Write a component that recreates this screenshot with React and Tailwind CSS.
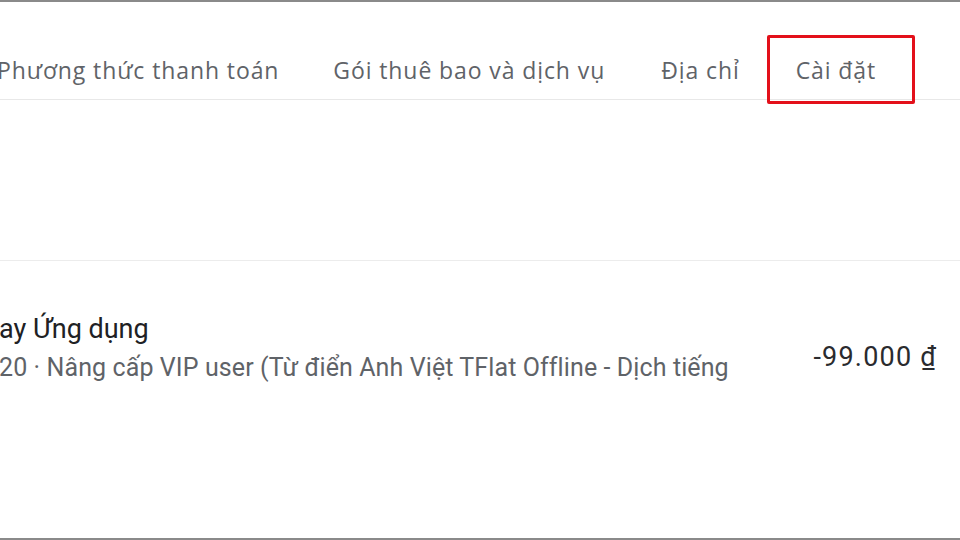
import React from 'react';

const tabs = ['Phương thức thanh toán', 'Gói thuê bao và dịch vụ', 'Địa chỉ', 'Cài đặt'];

export default function App() {
	return (
		<div className="w-[960px] h-[540px] bg-white border-t-2 border-b-2 border-[#8a8a8a] flex flex-col overflow-hidden font-['Roboto',sans-serif]">
			<div className="flex items-center h-[98px] pt-[40px] border-b border-[#e8e8e8] ml-[-3px]">
				{tabs.map((tab, index) => (
					<div
						key={tab}
						className={`relative shrink-0 ${index === 0 ? 'pr-[27px]' : index === 2 ? 'px-[29px]' : 'px-[27px]'}`}
					>
						<span className="text-[23px] leading-[28px] text-[#5f6368] font-['Open_Sans',sans-serif] tracking-[0.9px] whitespace-nowrap">{tab}</span>
						{tab === 'Cài đặt' ? (
							<div className="absolute left-[-2px] right-[-12px] top-[-21px] bottom-[-18px] border-[3px] border-[#e3101a] rounded-[2px]" />
						) : null}
					</div>
				))}
			</div>

			<div className="h-[161px] border-b border-[#ececec]" />

			<div className="flex items-start justify-between pt-[52px] pr-[23px]">
				<div className="flex flex-col ml-[-1px]">
					<p className="text-[27px] leading-[32px] text-[#202124]">ay Ứng dụng</p>
					<p className="mt-[8px] text-[25px] leading-[30px] tracking-[0.1px] text-[#5f6368] whitespace-nowrap">20 · Nâng cấp VIP user (Từ điển Anh Việt TFlat Offline - Dịch tiếng</p>
				</div>
				<p className="mt-[27px] text-[27px] leading-[34px] tracking-[1.2px] text-[#2a2b2e]">-99.000 ₫</p>
			</div>
		</div>
	);
}
